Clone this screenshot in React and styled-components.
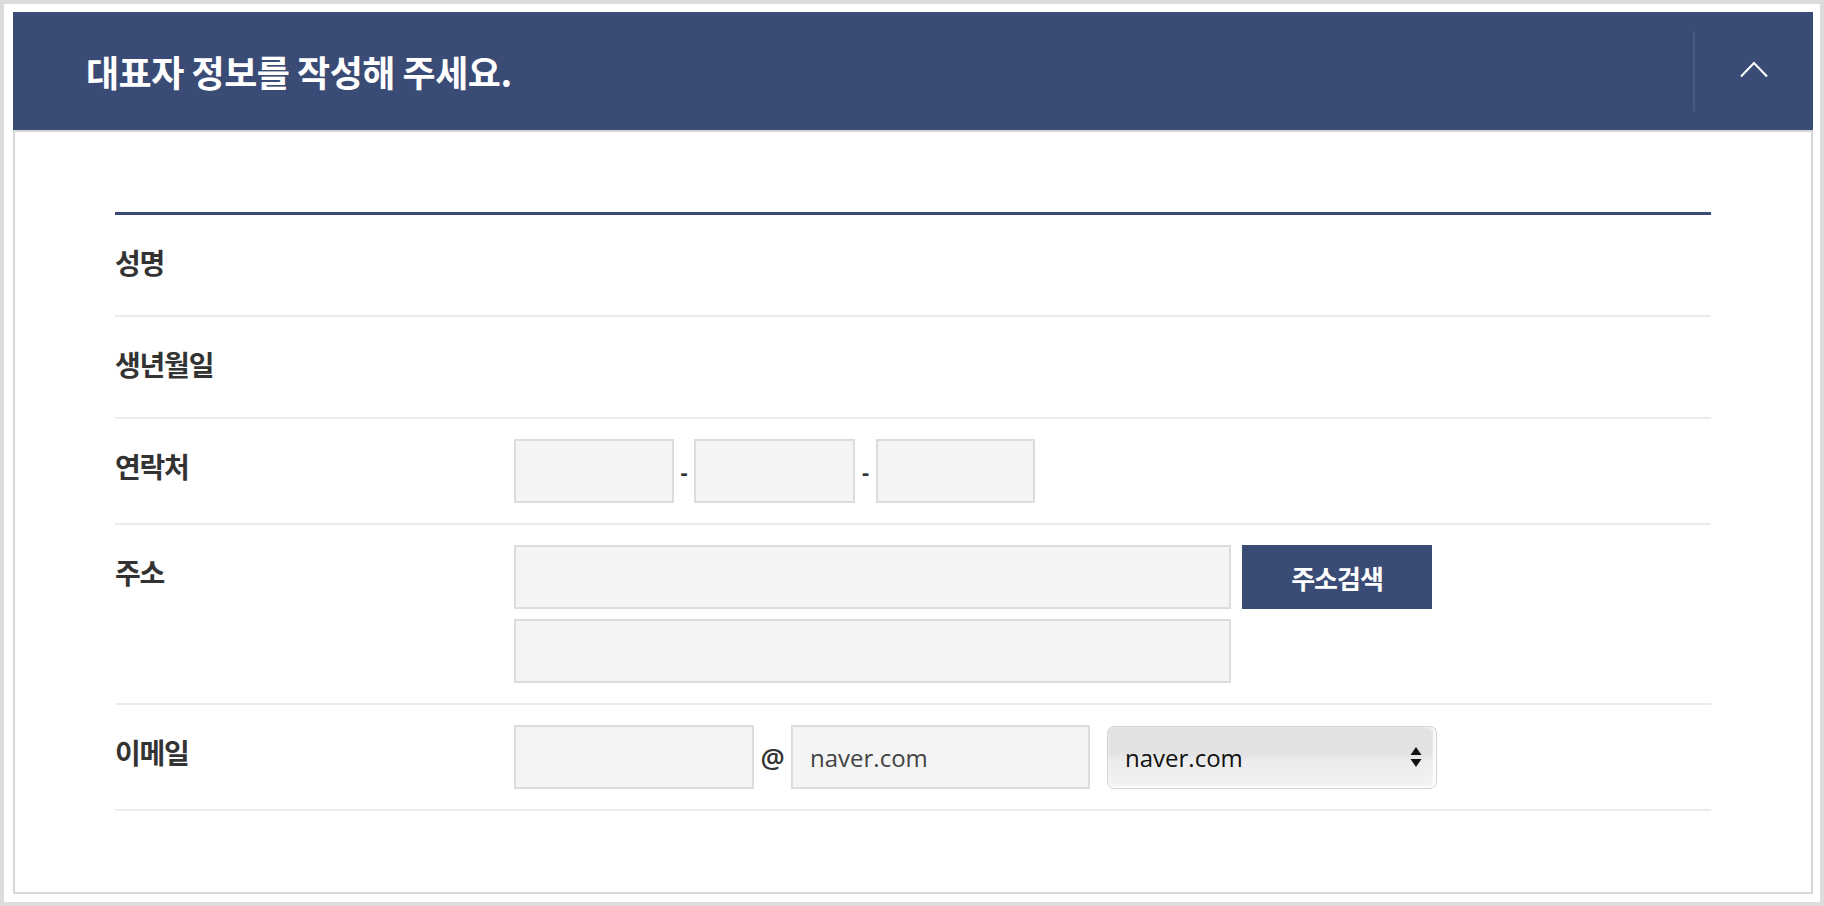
import React from "react";
import styled, { createGlobalStyle } from "styled-components";

const GlobalStyle = createGlobalStyle`
    * {
        box-sizing: border-box;
    }
    body {
        margin: 0;
        background: #fff;
        font-family: "Noto Sans CJK KR", "Noto Sans", sans-serif;
        color: #333;
    }
`;

const ChevronUp = () => (
    <svg width="28" height="18" viewBox="0 0 28 18" fill="none">
        <polyline
            points="1,16.5 14,3 27,16.5"
            stroke="#fff"
            strokeWidth="2"
            strokeLinejoin="miter"
        />
    </svg>
);

const SelectArrows = () => (
    <svg width="12" height="22" viewBox="0 0 12 22">
        <polygon points="6,1 11.5,9 0.5,9" fill="#111" />
        <polygon points="0.5,13 11.5,13 6,21" fill="#111" />
    </svg>
);

const App = () => {
    return (
        <>
            <GlobalStyle />
            <Frame>
                <Header>
                    <Title>대표자 정보를 작성해 주세요.</Title>
                    <Toggle type="button" aria-label="접기">
                        <ChevronUp />
                    </Toggle>
                </Header>
                <Body>
                    <FormTable>
                        <Row>
                            <Label>성명</Label>
                            <Field />
                        </Row>
                        <Row>
                            <Label>생년월일</Label>
                            <Field />
                        </Row>
                        <Row>
                            <Label>연락처</Label>
                            <Field>
                                <Line>
                                    <Input width={160} />
                                    <Sep width={20}>-</Sep>
                                    <Input width={161} />
                                    <Sep width={21}>-</Sep>
                                    <Input width={159} />
                                </Line>
                            </Field>
                        </Row>
                        <Row>
                            <Label>주소</Label>
                            <Field>
                                <Line>
                                    <Input width={717} />
                                    <SearchButton type="button">주소검색</SearchButton>
                                </Line>
                                <Line>
                                    <Input width={717} />
                                </Line>
                            </Field>
                        </Row>
                        <Row>
                            <Label>이메일</Label>
                            <Field>
                                <Line>
                                    <Input width={240} />
                                    <Sep width={37} at>
                                        @
                                    </Sep>
                                    <Input width={299} defaultValue="naver.com" />
                                    <SelectBox>
                                        <span>naver.com</span>
                                        <SelectArrows />
                                    </SelectBox>
                                </Line>
                            </Field>
                        </Row>
                    </FormTable>
                </Body>
            </Frame>
        </>
    );
};

export default App;

const Frame = styled.div`
    height: 906px;
    border: 4px solid #dcdcdc;
    padding: 8px 7px 8px 9px;
    display: flex;
    flex-direction: column;
`;

const Header = styled.header`
    height: 118px;
    background-color: #3a4b76;
    display: flex;
    align-items: center;
    justify-content: space-between;
    padding-left: 73px;
`;

const Title = styled.h1`
    margin: 0;
    color: #fff;
    font-size: 36px;
    font-weight: 700;
    letter-spacing: -0.5px;
`;

const Toggle = styled.button`
    width: 120px;
    height: 80px;
    border: 0;
    border-left: 2px solid #4a5b85;
    background: transparent;
    display: flex;
    align-items: center;
    justify-content: center;
    padding: 0 0 4px;
    cursor: pointer;
`;

const Body = styled.section`
    flex: 1;
    border: 2px solid #d6d6d6;
    padding: 80px 100px 0;
`;

const FormTable = styled.div`
    border-top: 3px solid #3a4b76;
`;

const Row = styled.div`
    display: grid;
    grid-template-columns: 399px 1fr;
    padding: 20px 0;
    border-bottom: 2px solid #ececec;
`;

const Label = styled.div`
    font-size: 28px;
    line-height: 54px;
    min-height: 60px;
    font-weight: 700;
    color: #333;
    letter-spacing: -1.2px;
`;

const Field = styled.div`
    display: flex;
    flex-direction: column;
    gap: 10px;
`;

const Line = styled.div`
    display: flex;
    align-items: center;
`;

const Input = styled.input`
    width: ${(p) => p.width}px;
    height: 64px;
    border: 2px solid #dcdcdc;
    background-color: #f4f4f4;
    padding: 0 17px;
    font-family: "Open Sans", "Noto Sans", sans-serif;
    font-size: 24px;
    color: #444;
    outline: none;
`;

const Sep = styled.span`
    width: ${(p) => p.width}px;
    text-align: center;
    font-family: "Open Sans", "Noto Sans", sans-serif;
    font-size: ${(p) => (p.at ? "27px" : "22px")};
    font-weight: ${(p) => (p.at ? 600 : 700)};
    color: #333;
`;

const SearchButton = styled.button`
    margin-left: 11px;
    width: 190px;
    height: 64px;
    border: 0;
    background-color: #3a4b76;
    color: #fff;
    font-family: "Noto Sans CJK KR", sans-serif;
    font-size: 26px;
    font-weight: 700;
    letter-spacing: -1px;
    cursor: pointer;
`;

const SelectBox = styled.div`
    margin-left: 17px;
    width: 330px;
    height: 63px;
    border: 1px solid #d2d2d2;
    border-radius: 7px;
    background: linear-gradient(#e1e1e1 0%, #e3e3e3 45%, #ececec 55%, #f3f3f3 100%);
    box-shadow: inset -3px 0 3px rgba(255, 255, 255, 0.9), inset 0 -2px 3px rgba(255, 255, 255, 0.8);
    display: flex;
    align-items: center;
    justify-content: space-between;
    padding: 0 14px 0 17px;
    font-family: "Open Sans", "Noto Sans", sans-serif;
    font-size: 24px;
    color: #111;
`;
